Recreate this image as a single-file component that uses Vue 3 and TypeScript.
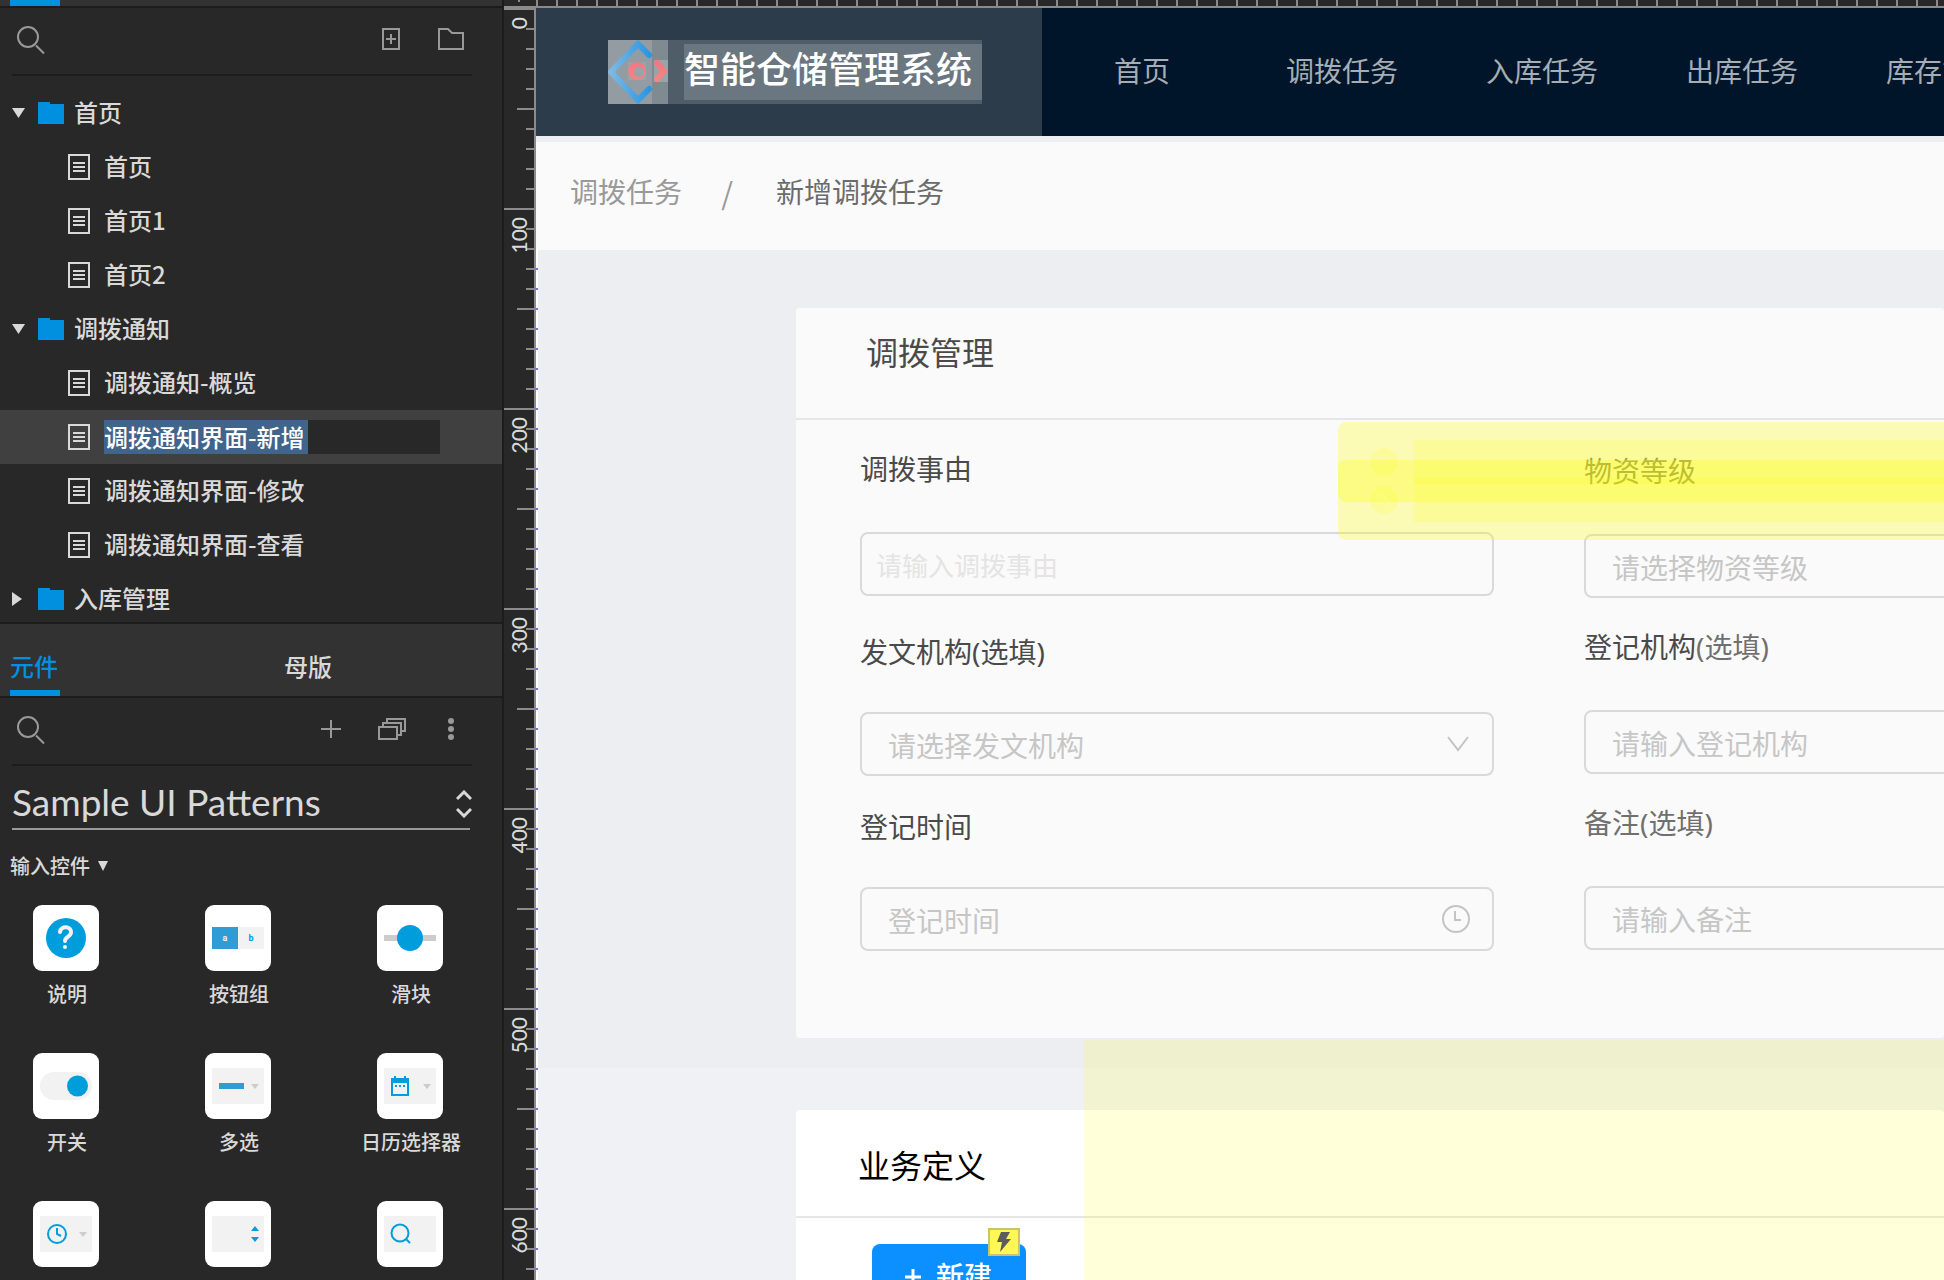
<script setup lang="ts">
interface TreeNode {
  id: number
  kind: 'folder' | 'page'
  label: string
  open?: boolean
  editing?: boolean
}

const tree: TreeNode[] = [
  { id: 1, kind: 'folder', label: '首页', open: true },
  { id: 2, kind: 'page', label: '首页' },
  { id: 3, kind: 'page', label: '首页1' },
  { id: 4, kind: 'page', label: '首页2' },
  { id: 5, kind: 'folder', label: '调拨通知', open: true },
  { id: 6, kind: 'page', label: '调拨通知-概览' },
  { id: 7, kind: 'page', label: '调拨通知界面-新增', editing: true },
  { id: 8, kind: 'page', label: '调拨通知界面-修改' },
  { id: 9, kind: 'page', label: '调拨通知界面-查看' },
  { id: 10, kind: 'folder', label: '入库管理', open: false },
]

const widgets: { icon: string; label: string }[] = [
  { icon: 'help', label: '说明' },
  { icon: 'group', label: '按钮组' },
  { icon: 'slider', label: '滑块' },
  { icon: 'switch', label: '开关' },
  { icon: 'multi', label: '多选' },
  { icon: 'calendar', label: '日历选择器' },
  { icon: 'time', label: '' },
  { icon: 'stepper', label: '' },
  { icon: 'search', label: '' },
]

const rulerMarks = [0, 100, 200, 300, 400, 500, 600]
const navItems = ['调拨任务', '入库任务', '出库任务', '库存管理']
</script>

<template>
  <div class="app">
    <aside class="sidebar">
      <div class="strip"><span class="tab-line"></span></div>

      <section class="pages">
        <div class="toolbar">
          <button class="tool" aria-label="搜索页面">
            <svg width="32" height="32" viewBox="0 0 32 32"><circle cx="14" cy="14" r="10" /><path d="M22 22.500l8 8" /></svg>
          </button>
          <button class="tool push" aria-label="新建页面">
            <svg width="18" height="22" viewBox="0 0 18 22"><path d="M1 1h16v20H1zM9 6v10M4 11h10" /></svg>
          </button>
          <button class="tool folder-tool" aria-label="新建文件夹">
            <svg width="26" height="22" viewBox="0 0 26 22"><path d="M1 1h9l4 4h11v16H1z" /></svg>
          </button>
        </div>
        <ul class="tree">
          <li v-for="n in tree" :key="n.id" :class="['node', n.kind, { editing: n.editing }]">
            <template v-if="n.kind === 'folder'">
              <svg class="caret" width="14" height="14" viewBox="0 0 14 14">
                <path v-if="n.open" d="M0 2h13l-6.500 10z" />
                <path v-else d="M0 0l10 7-10 7z" />
              </svg>
              <svg class="folder-icon" width="26" height="22" viewBox="0 0 26 22"><path d="M0 0h12v2h14v20H0z" /></svg>
            </template>
            <svg v-else class="page-icon" width="22" height="26" viewBox="0 0 22 26"><path d="M1 1h20v24H1zM5 9h12M5 13h12M5 17h12" /></svg>
            <input v-if="n.editing" class="rename" type="text" :value="n.label" aria-label="页面名称" />
            <span v-else>{{ n.label }}</span>
          </li>
        </ul>
      </section>

      <div class="tabs">
        <button class="tab active">元件</button>
        <button class="tab">母版</button>
      </div>

      <section class="library">
        <div class="toolbar">
          <button class="tool" aria-label="搜索元件">
            <svg width="32" height="32" viewBox="0 0 32 32"><circle cx="14" cy="14" r="10" /><path d="M22 22.500l8 8" /></svg>
          </button>
          <button class="tool push" aria-label="添加元件库">
            <svg width="20" height="20" viewBox="0 0 20 20"><path d="M10 1v18M0 10h20" /></svg>
          </button>
          <button class="tool stack-tool" aria-label="元件库">
            <svg width="28" height="22" viewBox="0 0 28 22"><path d="M1 9h18v12H1zM5 9V5h18v12h-4M9 5V1h18v12h-4" /></svg>
          </button>
          <button class="tool dots-tool" aria-label="更多">
            <svg width="6" height="24" viewBox="0 0 6 24" class="solid"><circle cx="3" cy="4" r="3" /><circle cx="3" cy="12" r="3" /><circle cx="3" cy="20" r="3" /></svg>
          </button>
        </div>
        <div class="library-pick">
          <select aria-label="元件库">
            <option>Sample UI Patterns</option>
          </select>
          <svg width="16" height="28" viewBox="0 0 16 28"><path d="M1 9l7-7 7 7M1 19l7 7 7-7" /></svg>
        </div>
        <h3 class="group">
          输入控件
          <svg width="10" height="10" viewBox="0 0 10 10"><path d="M0 0h10L5 10z" /></svg>
        </h3>
        <ul class="widgets">
          <li v-for="w in widgets" :key="w.icon">
            <div class="tile">
              <svg v-if="w.icon === 'help'" width="66" height="66" viewBox="0 0 66 66">
                <circle cx="33" cy="33" r="20" fill="#009ddc" />
                <path d="M27 27c1-7 12-6 11 1-1 4-6 4-6 8" fill="none" stroke="#f2f2f2" stroke-width="4" stroke-linecap="round" />
                <circle cx="32" cy="42" r="2" fill="#f2f2f2" />
              </svg>
              <div v-else-if="w.icon === 'group'" class="ab"><span>a</span><span>b</span></div>
              <svg v-else-if="w.icon === 'slider'" width="66" height="66" viewBox="0 0 66 66">
                <path d="M7 30h52v6H7z" fill="#ccc" /><circle cx="33" cy="33" r="13" fill="#009ddc" />
              </svg>
              <svg v-else-if="w.icon === 'switch'" width="66" height="66" viewBox="0 0 66 66">
                <rect x="7" y="19" width="52" height="28" rx="14" fill="#f2f2f2" /><circle cx="44.500" cy="33" r="10.500" fill="#009ddc" />
              </svg>
              <svg v-else width="66" height="66" viewBox="0 0 66 66">
                <path d="M7 15h52v36H7z" fill="#f2f2f2" />
                <path v-if="w.icon === 'multi'" d="M14 30h25v6H14z" fill="#309cd5" />
                <path v-if="w.icon === 'calendar'" fill="#009ddc" fill-rule="evenodd" d="M14 25h3v-2h2v2h8v-2h2v2h3v18H14zM16 30v11h14V30zM18 32h2v2h-2zM22 32h2v2h-2zM26 32h2v2h-2z" />
                <path v-if="['multi', 'calendar', 'time'].includes(w.icon)" d="M46 31h8l-4 5z" fill="#ccc" />
                <g v-if="w.icon === 'time'" fill="none" stroke="#009ddc" stroke-width="2"><circle cx="24" cy="33" r="9" /><path d="M24 27v6l4 2" /></g>
                <path v-if="w.icon === 'stepper'" d="M46 30h8l-4-5zM46 36h8l-4 5z" fill="#009ddc" />
                <g v-if="w.icon === 'search'" fill="none" stroke="#009ddc" stroke-width="2"><circle cx="23" cy="32" r="8.500" /><path d="M29 38l4 4" /></g>
              </svg>
            </div>
            <span class="name">{{ w.label }}</span>
          </li>
        </ul>
      </section>
    </aside>

    <div class="workspace">
      <div class="ruler-x"><span class="corner"></span></div>
      <div class="workspace-body">
        <div class="ruler-y">
          <div v-for="m in rulerMarks" :key="m" class="mark"><span>{{ m }}</span></div>
        </div>
        <main class="board">
          <header class="topbar">
            <div class="brand">
              <div class="brand-box">
                <svg class="logo" width="60" height="64" viewBox="0 0 60 64">
                  <defs>
                    <linearGradient id="blue" x1="0" x2="1"><stop offset="0" stop-color="#7db9e2" /><stop offset="1" stop-color="#2a96e2" /></linearGradient>
                    <linearGradient id="red" x1="0" x2="0" y1="0" y2="1"><stop offset="0" stop-color="#f37682" /><stop offset="1" stop-color="#f58580" /></linearGradient>
                  </defs>
                  <path d="M0 0h44v64H0z" fill="#939ca3" />
                  <path d="M44 0h16v64H44z" fill="#7f8b91" />
                  <path d="M20 22h18v18H20zM46 20h14v22H46z" fill="#97a5aa" />
                  <path d="M41 15L30 4 3 32l27 28 11-11" fill="none" stroke="url(#blue)" stroke-width="6" stroke-linecap="round" />
                  <circle cx="29" cy="31" r="9" fill="url(#red)" /><circle cx="31" cy="32" r="5" fill="#97a5aa" />
                  <path d="M49 23l7 8-7 8" fill="none" stroke="url(#red)" stroke-width="6" stroke-linecap="round" />
                </svg>
                <h1>智能仓储管理系统</h1>
              </div>
            </div>
            <nav>
              <a href="#" class="home">首页</a>
              <a v-for="item in navItems" :key="item" href="#">{{ item }}</a>
            </nav>
          </header>
          <div class="breadcrumb">
            <a href="#">调拨任务</a><span class="slash">/</span><span class="current">新增调拨任务</span>
          </div>
          <div class="content">
            <div class="upper">
              <section class="card manage">
                <h2>调拨管理</h2>
                <div class="form">
                  <div class="column left">
                    <div class="field">
                      <label for="reason">调拨事由</label>
                      <input id="reason" class="box faint" type="text" placeholder="请输入调拨事由" />
                    </div>
                    <div class="field">
                      <label for="issuer">发文机构(选填)</label>
                      <div class="control">
                        <select id="issuer" class="box"><option>请选择发文机构</option></select>
                        <svg class="affix chevron" width="22" height="16" viewBox="0 0 22 16"><path d="M1 1l10 13L21 1" /></svg>
                      </div>
                    </div>
                    <div class="field">
                      <label for="time">登记时间</label>
                      <div class="control">
                        <input id="time" class="box" type="text" placeholder="登记时间" />
                        <svg class="affix clock" width="30" height="30" viewBox="0 0 30 30"><circle cx="15" cy="15" r="13" /><path d="M14 7v9h6" /></svg>
                      </div>
                    </div>
                  </div>
                  <div class="column right">
                    <div class="field">
                      <label for="grade" class="soft">物资等级</label>
                      <select id="grade" class="box"><option>请选择物资等级</option></select>
                    </div>
                    <div class="field">
                      <label for="registrar">登记机构<span class="soft">(选填)</span></label>
                      <input id="registrar" class="box" type="text" placeholder="请输入登记机构" />
                    </div>
                    <div class="field">
                      <label for="note" class="soft">备注(选填)</label>
                      <input id="note" class="box" type="text" placeholder="请输入备注" />
                    </div>
                  </div>
                  <div class="master first"><i></i><svg width="28" height="28" viewBox="0 0 28 28"><circle cx="14" cy="14" r="14" /><path d="M6 13l5-5 10 11" /></svg></div>
                  <div class="master second"><i></i><svg width="28" height="28" viewBox="0 0 28 28"><circle cx="14" cy="14" r="14" /><path d="M6 13l5-5 10 11" /></svg></div>
                </div>
              </section>
            </div>
            <div class="lower">
              <section class="card define">
                <h2>业务定义</h2>
                <div class="actions">
                  <button class="create">
                    <svg width="16" height="16" viewBox="0 0 16 16"><path d="M8 0v16M0 8h16" /></svg>新建
                    <span class="bolt"><svg width="14" height="20" viewBox="0 0 14 20"><path d="M4 0h9L9 7h5L3 20l2-10H0z" /></svg></span>
                  </button>
                </div>
              </section>
            </div>
            <div class="hotspot"></div>
          </div>
        </main>
      </div>
    </div>
  </div>
</template>

<style>
body {
  overflow: hidden;
}
</style>

<style scoped>
* {
  box-sizing: border-box;
}
.app {
  display: flex;
  height: 100vh;
  overflow: hidden;
  background: #282828;
  font-family: "Noto Sans", "Noto Sans CJK SC", sans-serif;
}
button, input, select {
  font-family: inherit;
  margin: 0;
  border: 0;
  background: none;
}
svg {
  display: block;
}
ul {
  list-style: none;
  margin: 0;
  padding: 0;
}
h1, h2, h3 {
  margin: 0;
  font-weight: 400;
}
a {
  text-decoration: none;
}

/* sidebar */
.sidebar {
  flex: none;
  display: flex;
  flex-direction: column;
  width: 504px;
  border-right: 2px solid #1c1c1c;
  color: #d9d9d9;
  overflow: hidden;
  font-family: "Noto Sans CJK SC", sans-serif;
}
.strip {
  flex: none;
  height: 8px;
  padding-left: 10px;
  background: #323232;
  border-bottom: 2px solid #1c1c1c;
}
.tab-line {
  display: block;
  width: 50px;
  height: 6px;
  background: #0090e0;
}
.toolbar {
  display: flex;
  align-items: center;
  height: 68px;
  margin: 0 30px 0 12px;
  padding: 0 8px 4px 2px;
  border-bottom: 2px solid #1c1c1c;
}
.tool {
  padding: 0;
}
.tool svg {
  fill: none;
  stroke: #999;
  stroke-width: 2;
}
.tool svg.solid {
  fill: #999;
  stroke: none;
}
.push {
  margin-left: auto;
}
.folder-tool {
  margin-left: 38px;
}
.stack-tool {
  margin-left: 37px;
}
.dots-tool {
  margin: 0 10px 0 42px;
}
.pages {
  flex: none;
  height: 616px;
  border-bottom: 2px solid #1c1c1c;
  overflow: hidden;
}
.tree {
  padding-top: 10px;
}
.node {
  display: flex;
  align-items: center;
  height: 54px;
  padding-left: 12px;
  font-size: 24px;
  line-height: 32px;
  font-weight: 500;
}
.node span {
  padding-bottom: 2px;
}
.node.page {
  padding-left: 68px;
}
.node.editing {
  background: #404040;
}
.caret {
  fill: #d9d9d9;
}
.folder-icon {
  margin: 0 10px 0 12px;
  fill: #0090e0;
}
.page-icon {
  margin-right: 14px;
  fill: none;
  stroke: #d9d9d9;
  stroke-width: 2;
}
.rename {
  width: 336px;
  height: 34px;
  padding: 0 0 2px;
  color: #fff;
  font-size: 24px;
  font-weight: 500;
  background: linear-gradient(#40648a, #40648a) 0 0 / 204px 100% no-repeat #282828;
}
.tabs {
  flex: none;
  display: flex;
  height: 74px;
  padding-left: 10px;
  background: #323232;
  border-bottom: 2px solid #1c1c1c;
}
.tab {
  flex: none;
  width: 50px;
  margin-right: 224px;
  padding: 16px 0 0;
  border-bottom: 6px solid transparent;
  color: #d9d9d9;
  font-size: 24px;
  font-weight: 500;
  text-align: left;
  white-space: nowrap;
}
.tab:last-child {
  margin-right: 0;
}
.tab.active {
  color: #0090e0;
  border-color: #0090e0;
}
.library-pick {
  display: flex;
  align-items: center;
  height: 64px;
  margin: 0 32px 0 12px;
  border-bottom: 2px solid #999;
}
.library-pick select {
  flex: 1;
  padding: 10px 0 0;
  appearance: none;
  color: #d9d9d9;
  font-family: Lato, sans-serif;
  font-size: 37px;
  line-height: 44px;
}
.library-pick svg {
  margin: 14px -2px 0 0;
  fill: none;
  stroke: #d9d9d9;
  stroke-width: 3;
}
.group {
  display: flex;
  align-items: center;
  gap: 8px;
  height: 75px;
  padding: 0 0 4px 10px;
  font-size: 20px;
  font-weight: 500;
}
.group svg {
  fill: #d9d9d9;
}
.widgets {
  display: grid;
  grid-template-columns: repeat(3, 172px);
  grid-auto-rows: 148px;
  margin-left: -20px;
}
.widgets li {
  display: flex;
  flex-direction: column;
  align-items: center;
}
.tile {
  display: flex;
  align-items: center;
  justify-content: center;
  width: 66px;
  height: 66px;
  border-radius: 9px;
  background: #fff;
}
.name {
  margin-top: 8px;
  padding-left: 2px;
  font-size: 20px;
  line-height: 30px;
  font-weight: 500;
}
.ab {
  display: flex;
  color: #009ddc;
  font: bold 9px/22px Roboto, sans-serif;
  text-align: center;
}
.ab span {
  width: 26px;
  background: #f2f2f2;
}
.ab span:first-child {
  background: #309cd5;
  color: #f2f2f2;
}

/* rulers */
.workspace {
  flex: 1;
  min-width: 0;
  display: flex;
  flex-direction: column;
}
.ruler-x {
  flex: none;
  height: 8px;
  border-bottom: 2px solid #8c8a8a;
  background: repeating-linear-gradient(90deg, #8c8a8a 0 2px, transparent 2px 20px) 32px 0 no-repeat #282828;
  padding-left: 14px;
}
.corner {
  display: block;
  width: 2px;
  height: 2px;
  background: #8c8a8a;
}
.workspace-body {
  flex: 1;
  min-height: 0;
  display: flex;
  overflow: hidden;
}
.ruler-y {
  flex: none;
  width: 32px;
  border-right: 2px solid #8c8a8a;
}
.mark {
  height: 200px;
  padding: 9px 0 0 4px;
  background:
    linear-gradient(#8c8a8a, #8c8a8a) 0 0 / 30px 2px no-repeat,
    linear-gradient(#8c8a8a, #8c8a8a) 100% 100px / 17px 2px no-repeat,
    repeating-linear-gradient(#8c8a8a 0 2px, transparent 2px 20px) 100% 0 / 8px 100% no-repeat;
}
.mark span {
  display: block;
  width: 22px;
  writing-mode: vertical-rl;
  transform: rotate(180deg);
  color: #d9d9d9;
  font-family: Lato, sans-serif;
  font-size: 21px;
  line-height: 22px;
  font-weight: 500;
}

/* artboard */
.board {
  flex: 1;
  min-width: 0;
  overflow: hidden;
  background: #edeef2;
}
.topbar {
  display: flex;
  height: 128px;
  background: #001529;
}
.brand {
  flex: none;
  display: flex;
  align-items: center;
  width: 506px;
  padding-left: 72px;
  background: #2c3c4a;
}
.brand-box {
  display: flex;
  align-items: center;
  height: 64px;
  background: #4e5d68;
}
.brand h1 {
  margin-left: 16px;
  padding: 0 10px 4px 0;
  color: #fff;
  background: #6b7780;
  font-size: 36px;
  line-height: 52px;
  font-weight: 500;
}
nav {
  display: flex;
  align-items: center;
  padding: 0 0 2px 72px;
}
nav a {
  flex: none;
  margin-right: 88px;
  color: #a6adb4;
  font-size: 28px;
  line-height: 40px;
}
nav .home {
  margin-right: 116px;
}
.breadcrumb {
  display: flex;
  align-items: center;
  height: 108px;
  margin-top: 6px;
  padding: 0 0 8px 34px;
  background: #fafafa;
  font-size: 28px;
  line-height: 40px;
  color: #999;
}
.breadcrumb a {
  color: #999;
}
.slash {
  width: 94px;
  padding-right: 4px;
  font-family: "Noto Sans CJK SC", sans-serif;
  font-size: 30px;
  text-align: center;
}
.current {
  color: #6b6b6b;
}
.content {
  position: relative;
  border-left: 2px solid #fff;
}
.upper {
  padding: 58px 0 30px 258px;
}
.lower {
  padding: 42px 0 0 258px;
  min-height: 212px;
  background: #f0f1f5;
}
.card {
  border-radius: 4px;
}
.card h2 {
  border-bottom: 2px solid #e6e6e6;
  font-size: 32px;
  line-height: 48px;
}
.manage {
  height: 730px;
  background: #fafafa;
}
.manage h2 {
  height: 112px;
  padding: 21px 0 0 70px;
  color: #4a4a4a;
}
.define {
  background: #fff;
}
.define h2 {
  height: 108px;
  padding: 32px 0 0 62px;
  color: #000;
}
.form {
  position: relative;
  display: flex;
  gap: 90px;
  padding: 33px 0 0 64px;
  overflow: hidden;
}
.column {
  flex: none;
  display: flex;
  flex-direction: column;
  width: 634px;
}
.left {
  gap: 33px;
}
.left .field:first-child {
  margin-bottom: 5px;
}
.right {
  gap: 33px;
  padding-top: 2px;
}
.field {
  display: flex;
  flex-direction: column;
  gap: 47px;
}
.field label {
  height: 32px;
  color: #4a4a4a;
  font-size: 28px;
  line-height: 32px;
}
.left .field + .field label {
  padding-top: 2px;
}
.field .soft {
  color: #707070;
}
.control {
  position: relative;
}
.left .field + .field {
  gap: 46px;
}
.box {
  display: block;
  width: 100%;
  height: 64px;
  padding: 4px 26px 0;
  border: 2px solid #d9d9d9;
  border-radius: 8px;
  appearance: none;
  color: #c6c6c6;
  font-size: 28px;
}
.box::placeholder {
  color: #c6c6c6;
  opacity: 1;
}
.faint {
  padding: 4px 14px 0;
  font-size: 26px;
}
.faint::placeholder {
  color: #e4e4e4;
}
.affix {
  position: absolute;
  fill: none;
  stroke: #c4c4c4;
  stroke-width: 2;
}
.chevron {
  right: 25px;
  top: 24px;
}
.clock {
  right: 23px;
  top: 17px;
}
.master {
  position: absolute;
  left: 542px;
  right: -8px;
  height: 80px;
  border-radius: 8px;
  background: rgba(255, 255, 0, 0.27);
}
.first {
  top: 2px;
}
.second {
  top: 40px;
}
.master i {
  position: absolute;
  left: 76px;
  right: 0;
  top: 18px;
  height: 44px;
  background: rgba(255, 255, 0, 0.15);
}
.master svg {
  position: absolute;
  left: 32px;
  top: 26px;
  fill: rgba(255, 255, 0, 0.14);
  stroke: none;
}
.master path {
  fill: none;
  stroke: rgba(255, 255, 230, 0.15);
  stroke-width: 2;
}
.actions {
  padding: 26px 0 0 76px;
}
.create {
  position: relative;
  display: flex;
  align-items: center;
  gap: 15px;
  width: 154px;
  height: 64px;
  padding: 0 0 2px 33px;
  border-radius: 8px;
  background: #0c8fff;
  color: #fff;
  font-size: 28px;
  font-weight: 500;
}
.create svg {
  margin-top: 4px;
  stroke: #fff;
  stroke-width: 3;
}
.bolt {
  position: absolute;
  right: 6px;
  top: -16px;
  display: flex;
  align-items: center;
  justify-content: center;
  width: 32px;
  height: 28px;
  border: 2px solid #c9c46a;
  background: #fff753;
}
.bolt svg {
  margin-top: 0;
  fill: #5c5c5c;
  stroke: none;
}
.hotspot {
  position: absolute;
  left: 546px;
  right: 0;
  top: 790px;
  bottom: 0;
  background: rgba(255, 255, 0, 0.15);
}
.content::before {
  content: "";
  position: absolute;
  left: -2px;
  top: 18px;
  bottom: 0;
  width: 2px;
  background: repeating-linear-gradient(#6f6ff5 0 2px, transparent 2px 20px);
}
</style>
